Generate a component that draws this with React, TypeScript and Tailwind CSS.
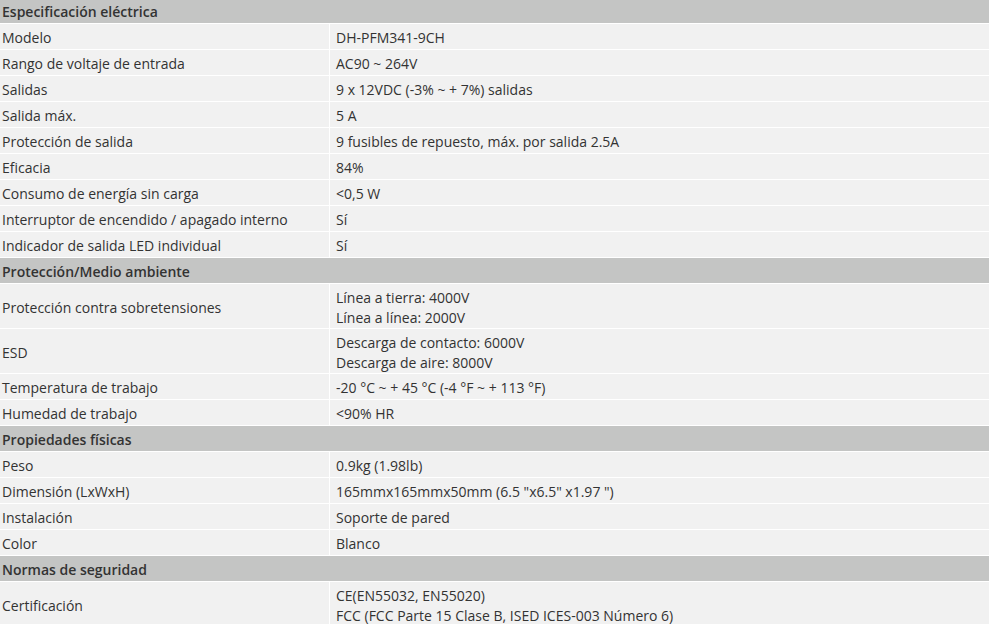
import React from "react";

type Row = { h: string } | { k: string; v: string[] };

const rows: Row[] = [
  { h: "Especificación eléctrica" },
  { k: "Modelo", v: ["DH-PFM341-9CH"] },
  { k: "Rango de voltaje de entrada", v: ["AC90 ~ 264V"] },
  { k: "Salidas", v: ["9 x 12VDC (-3% ~ + 7%) salidas"] },
  { k: "Salida máx.", v: ["5 A"] },
  { k: "Protección de salida", v: ["9 fusibles de repuesto, máx. por salida 2.5A"] },
  { k: "Eficacia", v: ["84%"] },
  { k: "Consumo de energía sin carga", v: ["<0,5 W"] },
  { k: "Interruptor de encendido / apagado interno", v: ["Sí"] },
  { k: "Indicador de salida LED individual", v: ["Sí"] },
  { h: "Protección/Medio ambiente" },
  { k: "Protección contra sobretensiones", v: ["Línea a tierra: 4000V", "Línea a línea: 2000V"] },
  { k: "ESD", v: ["Descarga de contacto: 6000V", "Descarga de aire: 8000V"] },
  { k: "Temperatura de trabajo", v: ["-20 °C ~ + 45 °C (-4 °F ~ + 113 °F)"] },
  { k: "Humedad de trabajo", v: ["<90% HR"] },
  { h: "Propiedades físicas" },
  { k: "Peso", v: ["0.9kg (1.98lb)"] },
  { k: "Dimensión (LxWxH)", v: ['165mmx165mmx50mm (6.5 "x6.5" x1.97 ")'] },
  { k: "Instalación", v: ["Soporte de pared"] },
  { k: "Color", v: ["Blanco"] },
  { h: "Normas de seguridad" },
  { k: "Certificación", v: ["CE(EN55032, EN55020)", "FCC (FCC Parte 15 Clase B, ISED ICES-003 Número 6)"] },
];

export default function App() {
  return (
    <div className="w-[990px] h-[624px] overflow-hidden bg-white">
      <div
        className="mt-[-2px] w-[989px] grid grid-cols-[329px_1fr] gap-px bg-white text-[14px] leading-5 text-[#333333]"
        style={{ fontFamily: '"Open Sans", "Noto Sans", sans-serif' }}
      >
        {rows.map((r, i) =>
          "h" in r ? (
            <div
              key={i}
              className="col-span-2 bg-[#c4c5c4] pl-[2px] pt-[4px] pb-[1px] font-semibold"
            >
              {r.h}
            </div>
          ) : (
            <React.Fragment key={i}>
              <div
                className={
                  r.v.length > 1
                    ? "bg-[#f1f1f1] pl-[2px] pt-[4px] pb-0 flex items-center"
                    : "bg-[#f1f1f1] pl-[2px] pt-[4px] pb-[1px] flex items-center"
                }
              >
                {r.k}
              </div>
              <div
                className={
                  r.v.length > 1
                    ? "bg-[#f1f1f1] pl-[6px] pt-[4px] pb-0 flex flex-col justify-center"
                    : "bg-[#f1f1f1] pl-[6px] pt-[4px] pb-[1px] flex flex-col justify-center"
                }
              >
                {r.v.map((t, j) => (
                  <div key={j}>{t}</div>
                ))}
              </div>
            </React.Fragment>
          )
        )}
      </div>
    </div>
  );
}
